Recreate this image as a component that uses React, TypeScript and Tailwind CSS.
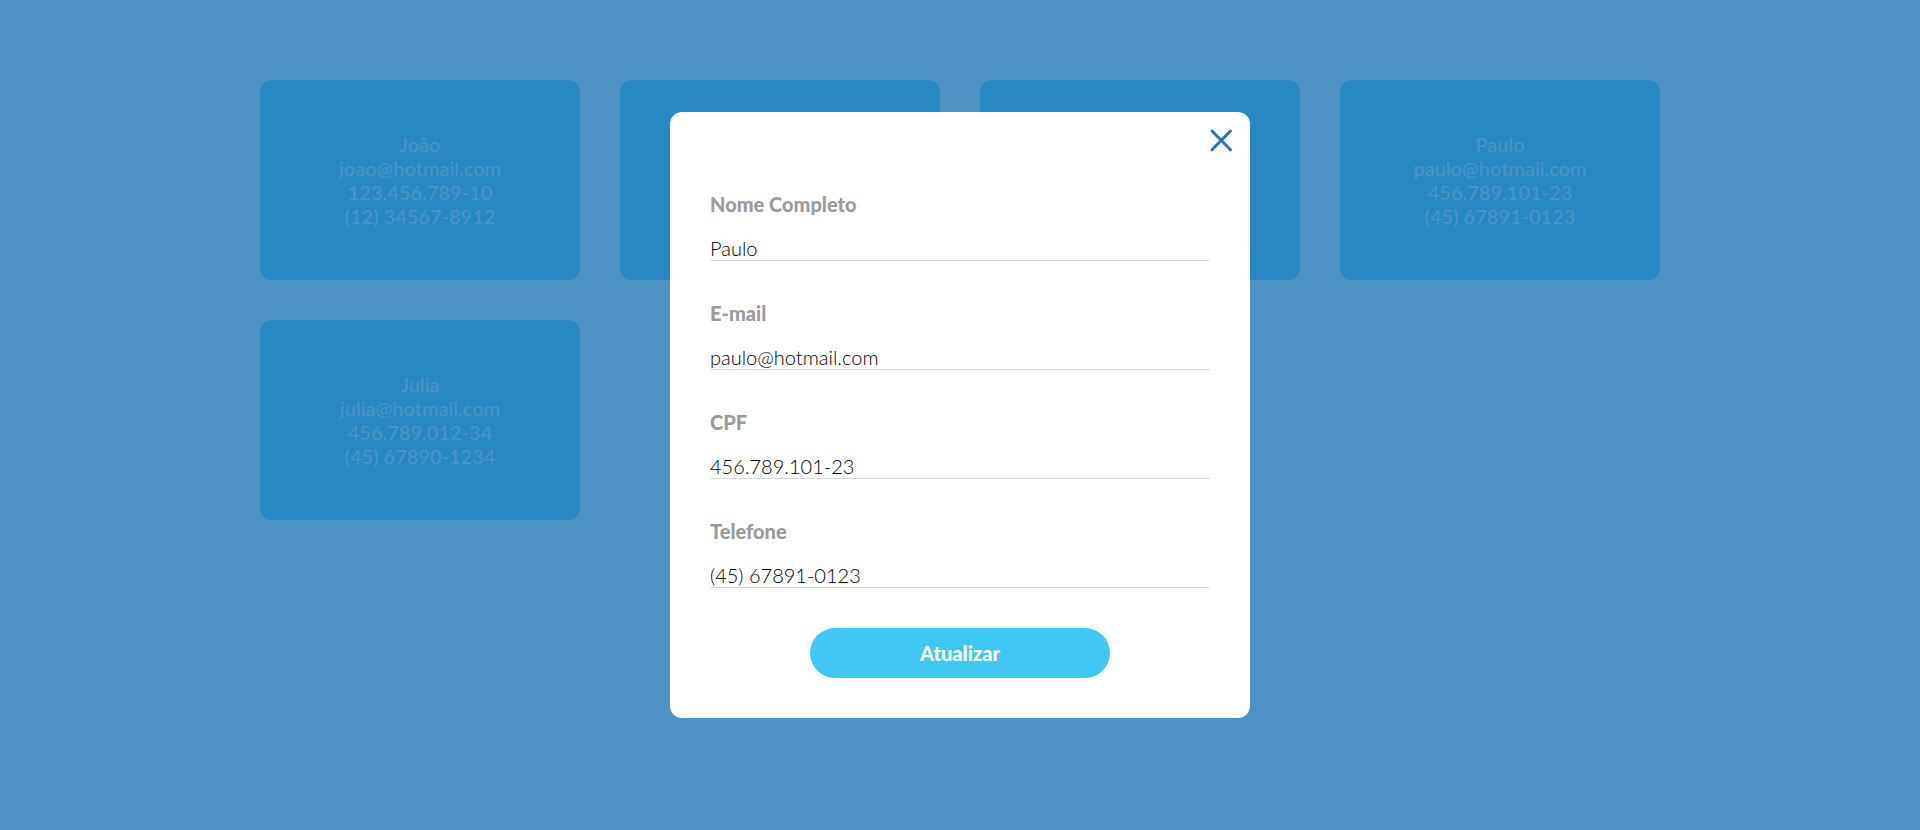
import React from "react";

type Client = { id: number; name?: string; email?: string; cpf?: string; phone?: string };

const clients: Client[] = [
  { id: 1, name: "João", email: "joao@hotmail.com", cpf: "123.456.789-10", phone: "(12) 34567-8912" },
  { id: 2 },
  { id: 3 },
  { id: 4, name: "Paulo", email: "paulo@hotmail.com", cpf: "456.789.101-23", phone: "(45) 67891-0123" },
  { id: 5, name: "Julia", email: "julia@hotmail.com", cpf: "456.789.012-34", phone: "(45) 67890-1234" },
];

function ClientCard({ client }: { client: Client }) {
  return (
    <li className="flex h-[200px] flex-col items-center justify-center rounded-xl bg-[#40c8f4] font-medium text-white">
      <span>{client.name}</span>
      <span>{client.email}</span>
      <span>{client.cpf}</span>
      <span>{client.phone}</span>
    </li>
  );
}

function Field({ id, label, type, value }: { id: string; label: string; type: string; value?: string }) {
  return (
    <div className="flex flex-col gap-5">
      <label htmlFor={id} className="font-black text-[#9b9b9b]">
        {label}
      </label>
      <input
        id={id}
        type={type}
        defaultValue={value}
        className="h-[25px] w-full border-b border-[#d8d8d8] bg-transparent font-light text-black outline-none"
      />
    </div>
  );
}

export default function App() {
  const selected = clients[3];
  return (
    <div className="min-h-screen bg-white font-['Lato',sans-serif] text-[20px] leading-6">
      <main className="mx-auto max-w-[1480px] px-10 py-20">
        <ul className="grid grid-cols-1 gap-10 sm:grid-cols-2 lg:grid-cols-4">
          {clients.map((client) => (
            <ClientCard key={client.id} client={client} />
          ))}
        </ul>
      </main>

      <div className="fixed inset-0 flex items-center justify-center overflow-auto bg-[#2078b6]/80">
        <div
          role="dialog"
          aria-modal="true"
          aria-label={selected.name}
          className="relative w-full max-w-[580px] rounded-xl bg-white px-10 pt-20 pb-10"
        >
          <button type="button" aria-label="Fechar" className="absolute top-4 right-4 cursor-pointer text-[#2078b6]">
            <svg
              width="26"
              height="26"
              viewBox="0 0 26 26"
              fill="none"
              stroke="currentColor"
              strokeWidth="3"
              strokeLinecap="round"
            >
              <path d="M4 3 22.5 21.8M22.5 3 4 21.8" />
            </svg>
          </button>
          <form className="flex flex-col gap-10" onSubmit={(event) => event.preventDefault()}>
            <Field id="name" label="Nome Completo" type="text" value={selected.name} />
            <Field id="email" label="E-mail" type="email" value={selected.email} />
            <Field id="cpf" label="CPF" type="text" value={selected.cpf} />
            <Field id="phone" label="Telefone" type="tel" value={selected.phone} />
            <button
              type="submit"
              className="h-[50px] w-full max-w-[300px] cursor-pointer self-center rounded-full bg-[#40c8f4] font-black text-white"
            >
              Atualizar
            </button>
          </form>
        </div>
      </div>
    </div>
  );
}
